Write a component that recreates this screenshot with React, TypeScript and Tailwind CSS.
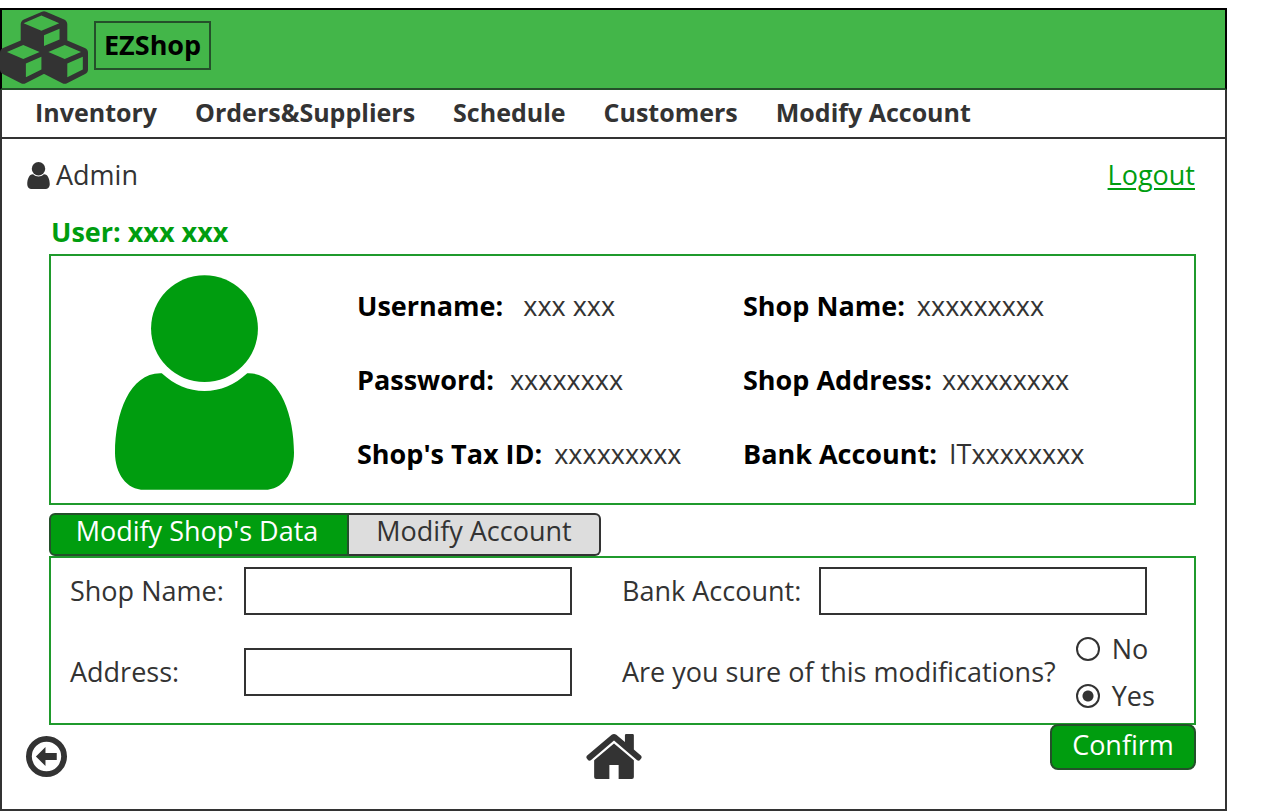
import { useState } from "react";

type Detail = { label: string; value: string; gap: string };

const NAV = ["Inventory", "Orders&Suppliers", "Schedule", "Customers", "Modify Account"];

const SHOP_COLUMNS: Detail[][] = [
  [
    { label: "Username:", value: "xxx xxx", gap: "gap-5" },
    { label: "Password:", value: "xxxxxxxx", gap: "gap-4" },
    { label: "Shop's Tax ID:", value: "xxxxxxxxx", gap: "gap-3" },
  ],
  [
    { label: "Shop Name:", value: "xxxxxxxxx", gap: "gap-3" },
    { label: "Shop Address:", value: "xxxxxxxxx", gap: "gap-2.5" },
    { label: "Bank Account:", value: "ITxxxxxxxx", gap: "gap-3" },
  ],
];

function CubesIcon({ className }: { className: string }) {
  return (
    <svg viewBox="0 0 2176 1792" className={className} fill="currentColor" aria-hidden="true">
      <path d="M640 1632l384-192v-314l-384 164v342zM576 1178l404-173-404-173-404 173zM1664 1632l384-192v-314l-384 164v342zM1600 1178l404-173-404-173-404 173zM1088 861l384-165v-266l-384 164v267zM1024 484l441-189-441-189-441 189zM2176 1024v416q0 36-19 67t-52 47l-448 224q-25 14-57 14t-57-14l-448-224q-5-2-7-4-2 2-7 4l-448 224q-25 14-57 14t-57-14l-448-224q-33-16-52-47t-19-67v-416q0-38 21.5-70t56.5-48l434-186v-400q0-38 21.5-70t56.5-48l448-192q23-10 50-10t50 10l448 192q35 16 56.5 48t21.5 70v400l434 186q36 16 57 48t21 70z" />
    </svg>
  );
}

function PersonIcon({ className }: { className: string }) {
  return (
    <svg viewBox="0 0 536 643" className={className} fill="currentColor" aria-hidden="true">
      <circle cx="268" cy="160" r="160" />
      <path d="M140 294C178 329 220 347 268 347S358 329 396 294C490 290 536 412 536 532C536 594 502 643 448 643H88C34 643 0 594 0 532C0 412 46 290 140 294Z" />
    </svg>
  );
}

function HomeIcon({ className }: { className: string }) {
  return (
    <svg viewBox="0 0 168 136" className={className} fill="currentColor" aria-hidden="true">
      <path d="M77 2Q84-2 91 2L117 24V4Q117 0 121 0H140Q144 0 144 4V47L166 66Q169 70 166 74L162 79Q158 82 154 79L84 20L14 79Q10 82 6 79L2 74Q-1 70 2 66Z" />
      <path d="M84 29L144 79V130Q144 136 138 136H98V94H70V136H30Q24 136 24 130V79Z" />
    </svg>
  );
}

function BackIcon({ className }: { className: string }) {
  return (
    <svg viewBox="0 0 120 120" className={className} aria-hidden="true">
      <circle cx="60" cy="60" r="51.5" fill="none" stroke="currentColor" strokeWidth="17" />
      <path d="M29 60L57 32V50H90V70H57V88Z" fill="currentColor" />
    </svg>
  );
}

function TextField({ id, label }: { id: string; label: string }) {
  return (
    <>
      <label htmlFor={id} className="whitespace-nowrap">{label}</label>
      <input id={id} type="text" className="h-12 w-full min-w-0 border-2 border-[#333] bg-white px-3" />
    </>
  );
}

export default function App() {
  const [tab, setTab] = useState("shop");
  const [answer, setAnswer] = useState("Yes");

  return (
    <div className="bg-white pt-2 pr-[53px] font-['Open_Sans','Noto_Sans',sans-serif] text-[27px] leading-9 text-[#333]">
      <div className="border-2 border-[#333]">
        <header className="-mx-0.5 -mt-0.5 flex h-[82px] items-center gap-1.5 border-2 border-black border-b-[#24502a] bg-[#43b649] pb-1">
          <CubesIcon className="-ml-0.5 h-[73px] w-[88px] shrink-0" />
          <h1 className="-mt-1 flex h-[49px] items-center border-2 border-[#24502a] px-2 font-bold text-black">
            EZShop
          </h1>
        </header>

        <nav className="flex h-[49px] items-center gap-[38px] border-b-2 border-[#333] pb-1 pl-[33px] text-[25px] font-bold">
          {NAV.map((item) => (
            <a key={item} href="#" className="whitespace-nowrap">{item}</a>
          ))}
        </nav>

        <div className="flex items-center justify-between pt-[18px] pr-[30px] pl-[25px]">
          <div className="flex items-center gap-1.5">
            <PersonIcon className="h-[27px] w-[23px]" />
            <span>Admin</span>
          </div>
          <a href="#" className="text-[#009d0f] underline decoration-2 underline-offset-3">Logout</a>
        </div>

        <main className="pr-[29px] pl-[47px]">
          <h2 className="mt-[21px] ml-0.5 font-bold text-[#009d0f]">User: xxx xxx</h2>

          <section className="mt-1 flex items-center border-2 border-[#1f9a2c] pt-[19px] pb-[13px] pl-16">
            <PersonIcon className="h-[215px] w-[179px] shrink-0 text-[#009d0f]" />
            <div className="ml-[63px] grid flex-1 grid-cols-[386px_1fr] pb-1.5">
              {SHOP_COLUMNS.map((column) => (
                <dl key={column[0].label} className="flex flex-col gap-[38px]">
                  {column.map((detail) => (
                    <div key={detail.label} className={`flex whitespace-nowrap ${detail.gap}`}>
                      <dt className="font-bold text-black">{detail.label}</dt>
                      <dd>{detail.value}</dd>
                    </div>
                  ))}
                </dl>
              ))}
            </div>
          </section>

          <div className="mt-2 flex" role="tablist">
            <button
              type="button"
              role="tab"
              aria-selected={tab === "shop"}
              onClick={() => setTab("shop")}
              className="h-[43px] w-[300px] rounded-l-md border-2 border-[#24502a] bg-[#009d0f] pr-1 pb-2 leading-8 text-white"
            >
              Modify Shop's Data
            </button>
            <button
              type="button"
              role="tab"
              aria-selected={tab === "account"}
              onClick={() => setTab("account")}
              className="h-[43px] w-[252px] rounded-r-md border-2 border-l-0 border-[#333] bg-[#ddd] pb-2 leading-8"
            >
              Modify Account
            </button>
          </div>

          <form onSubmit={(event) => event.preventDefault()}>
            <div className="grid grid-cols-[174px_1fr_50px_197px_1fr] items-center gap-y-3.5 border-2 border-[#1f9a2c] py-[9px] pr-[47px] pl-[19px]">
              <TextField id="shop-name" label="Shop Name:" />
              <span />
              <TextField id="bank-account" label="Bank Account:" />
              <TextField id="address" label="Address:" />
              <span />
              <fieldset className="col-span-2 -mr-4 flex items-center gap-5 whitespace-nowrap" aria-labelledby="question">
                <span id="question">Are you sure of this modifications?</span>
                <div className="flex flex-col gap-[11px] pt-0.5">
                  {["No", "Yes"].map((option) => (
                    <label key={option} className="flex items-center gap-3">
                      <input
                        type="radio"
                        name="confirm"
                        value={option}
                        checked={answer === option}
                        onChange={() => setAnswer(option)}
                        className="size-6 appearance-none rounded-full border-2 border-[#333] bg-white bg-[radial-gradient(circle,#333_5px,transparent_6px)] bg-center not-checked:bg-none"
                      />
                      {option}
                    </label>
                  ))}
                </div>
              </fieldset>
            </div>

            <div className="-mt-px -ml-[23px] grid grid-cols-[1fr_auto_1fr] items-start pb-[30px]">
              <button type="button" aria-label="Back" className="mt-3 justify-self-start">
                <BackIcon className="size-[41px]" />
              </button>
              <button type="button" aria-label="Home" className="mt-2.5 ml-1.5">
                <HomeIcon className="h-[45px] w-14" />
              </button>
              <button
                type="submit"
                className="h-[46px] w-[146px] justify-self-end rounded-lg border-2 border-[#24502a] bg-[#009d0f] pb-1 leading-9 text-white"
              >
                Confirm
              </button>
            </div>
          </form>
        </main>
      </div>
    </div>
  );
}
